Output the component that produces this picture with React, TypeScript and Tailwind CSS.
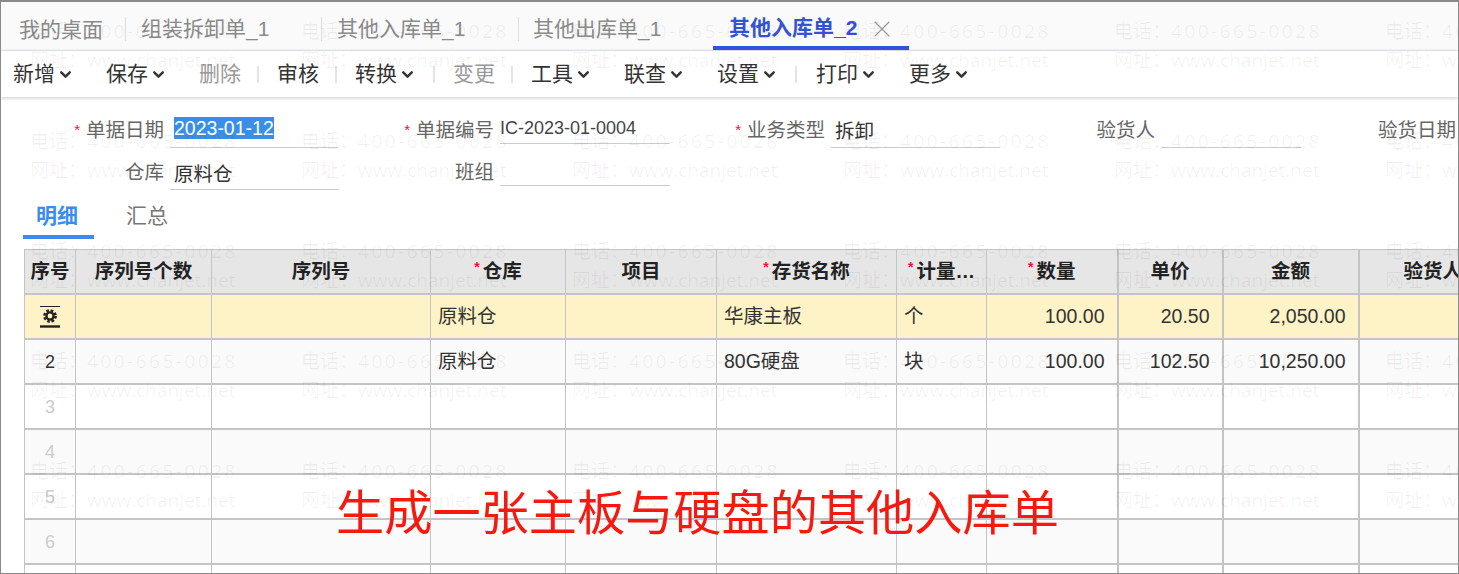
import React from "react";
import { ChevronDown, X } from "lucide-react";

const FONT = "font-['Liberation_Sans','Noto_Sans_CJK_SC',sans-serif]";

const tools: { label: string; className: string; arrow?: boolean; off?: boolean; sep?: boolean }[] = [
  { label: "新增", className: "ml-[12px] w-[93px]", arrow: true },
  { label: "保存", className: "w-[93px]", arrow: true },
  { label: "删除", className: "w-[60px]", off: true, sep: true },
  { label: "审核", className: "ml-[18px] w-[60px]", sep: true },
  { label: "转换", className: "ml-[18px] w-[80px]", arrow: true, sep: true },
  { label: "变更", className: "ml-[18px] w-[60px]", off: true, sep: true },
  { label: "工具", className: "ml-[18px] w-[93px]", arrow: true },
  { label: "联查", className: "w-[93px]", arrow: true },
  { label: "设置", className: "w-[80px]", arrow: true, sep: true },
  { label: "打印", className: "ml-[19px] w-[93px]", arrow: true },
  { label: "更多", className: "", arrow: true },
];

const columns = [
  { w: "w-[51px]", title: "序号" },
  { w: "w-[136px]", title: "序列号个数" },
  { w: "w-[219px]", title: "序列号" },
  { w: "w-[135px]", title: "仓库", req: true },
  { w: "w-[151px]", title: "项目" },
  { w: "w-[180px]", title: "存货名称", req: true },
  { w: "w-[90px]", title: "计量…", req: true },
  { w: "w-[131px]", title: "数量", req: true },
  { w: "w-[105px]", title: "单价" },
  { w: "w-[136px]", title: "金额" },
  { w: "w-[148px]", title: "验货人" },
];

const rows = [
  { bg: "bg-[#fdf3c6]", cells: ["", "", "", "原料仓", "", "华康主板", "个", "100.00", "20.50", "2,050.00", ""] },
  { bg: "bg-[#fafafa]", cells: ["2", "", "", "原料仓", "", "80G硬盘", "块", "100.00", "102.50", "10,250.00", ""] },
  { bg: "bg-white", cells: ["3", "", "", "", "", "", "", "", "", "", ""] },
  { bg: "bg-[#fafafa]", cells: ["4", "", "", "", "", "", "", "", "", "", ""] },
  { bg: "bg-white", cells: ["5", "", "", "", "", "", "", "", "", "", ""] },
  { bg: "bg-[#fafafa]", cells: ["6", "", "", "", "", "", "", "", "", "", ""] },
  { bg: "bg-white", cells: ["7", "", "", "", "", "", "", "", "", "", ""] },
];

const Req = () => <span className="text-[#f0103c] text-[14px] align-top mr-[3px]">*</span>;

const GearMark = () => (
  <svg width="22" height="24" viewBox="0 0 22 24" className="mx-auto block">
    <line x1="1" y1="1.5" x2="21" y2="1.5" stroke="#222" strokeWidth="1" />
    <circle cx="11" cy="11" r="5.6" fill="none" stroke="#222" strokeWidth="2.6" strokeDasharray="2.6 1.8" />
    <circle cx="11" cy="11" r="3.6" fill="none" stroke="#222" strokeWidth="2.4" />
    <line x1="1" y1="21.5" x2="21" y2="21.5" stroke="#222" strokeWidth="2.4" />
  </svg>
);

const Field: React.FC<{ label: string; req?: boolean; labelW: string; inputW: string; lineTop?: string; children?: React.ReactNode }> = ({
  label,
  req,
  labelW,
  inputW,
  lineTop,
  children,
}) => (
  <div className="flex shrink-0">
    <div className={`${labelW} text-right text-[#666] text-[19.5px] leading-[28px] whitespace-nowrap`}>
      {req && <span className="text-[#f0103c] text-[15px] align-top mr-[6px]">*</span>}
      {label}
    </div>
    <div className={`${inputW} ${lineTop ?? "h-[32px]"} ml-[6px] border-b border-[#ccc]`}>{children}</div>
  </div>
);

export default function App() {
  const marks = Array.from({ length: 30 });
  return (
    <div className={`${FONT} relative h-[574px] w-full overflow-hidden bg-white border border-t-2 border-[#8a8a8a] text-[#333]`}>
      {/* tabs */}
      <div className="flex h-[49px] items-start bg-[#fafafa] border-b border-[#e6e6ee] pl-[18px] text-[21px] text-[#8a8a8a]">
        <div className="mt-[15px] w-[106px] leading-[26px]">我的桌面</div>
        <div className="mt-[15px] w-[196px] h-[24px] pl-[15px] border-l border-[#ddd] leading-[24px]">组装拆卸单_1</div>
        <div className="mt-[15px] w-[197px] h-[24px] pl-[15px] border-l border-[#ddd] leading-[24px]">其他入库单_1</div>
        <div className="mt-[15px] w-[195px] h-[24px] pl-[14px] border-l border-[#ddd] leading-[24px]">其他出库单_1</div>
        <div className="flex items-start w-[196px] h-[48px] pl-[16px] pt-[13px] border-b-[4px] border-[#3452d8] text-[#3452d8] font-bold leading-[26px]">
          <span>其他入库单_2</span>
          <X size={28} strokeWidth={1} className="ml-[11px] mt-[0px] text-[#999]" />
        </div>
      </div>
      {/* toolbar */}
      <div className="flex h-[46px] items-center bg-white shadow-[0_1px_4px_rgba(0,0,0,0.22)] text-[21px]">
        {tools.map((t) => (
          <div key={t.label} className={`${t.className} flex shrink-0 items-center ${t.off ? "text-[#999]" : "text-[#333]"}`}>
            <span>{t.label}</span>
            {t.arrow && <ChevronDown size={17} strokeWidth={3.4} className="ml-[2px] mt-[1px]" />}
            {t.sep && <span className="ml-auto h-[17px] w-[2px] bg-[#e4e4e4]" />}
          </div>
        ))}
      </div>
      {/* form */}
      <div className="pt-[19px]">
        <div className="flex h-[42px]">
          <Field label="单据日期" req labelW="w-[163px]" inputW="w-[168px]">
            <span className="ml-[4px] mt-[1px] inline-block bg-[#3a8ee6] text-white text-[19.5px] leading-[22px] align-top">2023-01-12</span>
          </Field>
          <Field label="单据编号" req labelW="w-[156px]" inputW="w-[170px]" lineTop="h-[28px]">
            <span className="text-[18px] leading-[24px] text-[#444] block">IC-2023-01-0004</span>
          </Field>
          <Field label="业务类型" req labelW="w-[155px]" inputW="w-[169px]">
            <span className="ml-[4px] text-[19.5px] leading-[30px] block">拆卸</span>
          </Field>
          <Field label="验货人" labelW="w-[155px]" inputW="w-[140px]" />
          <Field label="验货日期" labelW="w-[155px]" inputW="w-[100px]" />
        </div>
        <div className="flex h-[38px]">
          <Field label="仓库" labelW="w-[163px]" inputW="w-[169px]" lineTop="h-[32px]">
            <span className="ml-[4px] text-[19.5px] leading-[32px] block">原料仓</span>
          </Field>
          <div className="w-[155px] text-right text-[#666] text-[19.5px] leading-[28px] shrink-0">班组</div>
          <div className="ml-[6px] w-[170px] h-[28px] border-b border-[#ccc]" />
        </div>
      </div>
      {/* detail tabs */}
      <div className="flex h-[45px] ml-[22px] mt-[8px] text-[21px]">
        <div className="w-[71px] h-[35px] pl-[13px] border-b-[4px] border-[#3b8bf0] text-[#3b8bf0] font-bold leading-[24px]">明细</div>
        <div className="ml-[32px] text-[#777] leading-[24px]">汇总</div>
      </div>
      {/* grid */}
      <table className="ml-[23px] w-[1482px] table-fixed border-collapse text-[19.5px]">
        <colgroup>
          {columns.map((c) => (
            <col key={c.title} className={c.w} />
          ))}
        </colgroup>
        <thead>
          <tr className="h-[44px] bg-[#e6e6e6]">
            {columns.map((c, j) => (
              <th
                key={c.title}
                className={`border border-[#c4c4c4] border-b-2 font-bold text-center text-[#222] whitespace-nowrap p-0 ${
                  j >= 7 && j <= 9 ? "border-r-2" : ""
                }`}
              >
                {c.req && <Req />}
                {c.title}
              </th>
            ))}
          </tr>
        </thead>
        <tbody>
          {rows.map((r, i) => (
            <tr key={i} className={`h-[45px] ${r.bg}`}>
              {r.cells.map((v, j) => (
                <td
                  key={j}
                  className={`border border-[#c4c4c4] border-b-2 pt-[2px] whitespace-nowrap text-[#333] ${
                    j >= 7 && j <= 9 ? "border-r-2" : ""
                  } ${
                    j === 0 ? `text-center ${i > 1 ? "text-[#ccc]" : "text-[#222]"} text-[18px]` : j >= 7 && j <= 9 ? "text-right pr-[12px]" : "pl-[7px]"
                  }`}
                >
                  {i === 0 && j === 0 ? <GearMark /> : v}
                </td>
              ))}
            </tr>
          ))}
        </tbody>
      </table>
      {/* watermark */}
      <div className="pointer-events-none absolute left-[29px] top-[15px] grid grid-cols-[repeat(6,271px)] auto-rows-[110px] font-['Open_Sans','Noto_Sans_CJK_SC',sans-serif] text-[19px] leading-[29px] text-black/[0.06] whitespace-nowrap">
        {marks.map((_, i) => (
          <div key={i}>
            <div>
              电话：<span className="tracking-[2.5px]">400-665-0028</span>
            </div>
            <div>网址：www.chanjet.net</div>
          </div>
        ))}
      </div>
      {/* caption */}
      <div className="absolute left-[335px] top-[481px] text-[48.2px] leading-[60px] text-[#f5190f] whitespace-nowrap">
        生成一张主板与硬盘的其他入库单
      </div>
    </div>
  );
}
